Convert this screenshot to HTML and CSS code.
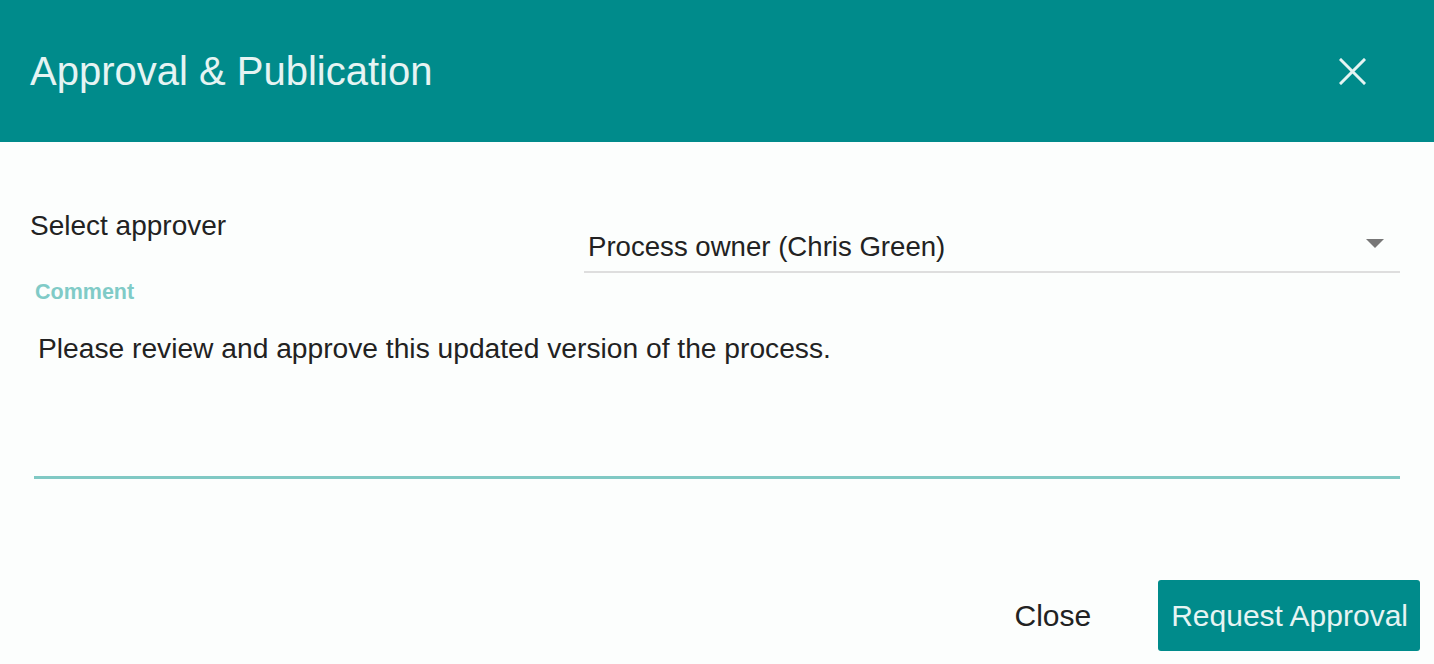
FILE: index.html
```html
<!DOCTYPE html>
<html lang="en">
<head>
  <meta charset="UTF-8" />
  <title>Approval &amp; Publication</title>
  <link rel="stylesheet" href="styles.css">
</head>
<body>

<div class="dialog">
  <!-- Header -->
  <div class="dialog-header">
    <h1>Approval &amp; Publication</h1>
    <button class="close-x" aria-label="Close">
      <svg width="27" height="27" viewBox="0 0 27 27">
        <path d="M2 2 L25 25 M25 2 L2 25" stroke="#e6f4f3" stroke-width="3" stroke-linecap="square" fill="none"/>
      </svg>
    </button>
  </div>

  <!-- Body -->
  <div class="dialog-body">
    <div class="row">
      <div class="label">Select approver</div>
      <div class="select">
        <span>Process owner (Chris Green)</span>
        <span class="arrow"></span>
      </div>
    </div>

    <div class="comment-label">Comment</div>
    <div class="comment-box">Please review and approve this updated version of the process.</div>
  </div>

  <!-- Footer -->
  <div class="dialog-footer">
    <button class="btn-flat">Close</button>
    <button class="btn-primary">Request Approval</button>
  </div>
</div>

</body>
</html>
```

FILE: styles.css
```css
body {
  margin: 0;
  background: #fcfefd;
  font-family: "Liberation Sans", Arial, sans-serif;
  color: #222;
}
.dialog {
  width: 1434px;
  height: 664px;
  display: flex;
  flex-direction: column;
}
.dialog-header {
  height: 142px;
  background: #008b8b;
  display: flex;
  align-items: center;
  justify-content: space-between;
  padding: 0 68px 0 30px;
  box-sizing: border-box;
}
.dialog-header h1 {
  margin: 0;
  font-size: 40px;
  font-weight: normal;
  color: #e6f4f3;
  line-height: 48px;
}
.close-x {
  background: none;
  border: none;
  padding: 0;
  width: 27px;
  height: 27px;
  cursor: pointer;
  display: block;
}
.close-x svg {
  display: block;
}
.dialog-body {
  padding: 68px 34px 0 30px;
}
.row {
  display: flex;
  align-items: flex-start;
}
.label {
  flex: 0 0 554px;
  font-size: 28px;
  line-height: 32px;
}
.select {
  flex: 1;
  margin-top: 21px;
  padding: 0 16px 8px 4px;
  border-bottom: 2px solid #dedede;
  display: flex;
  align-items: center;
  justify-content: space-between;
  font-size: 27.6px;
  line-height: 32px;
}
.arrow {
  width: 0;
  height: 0;
  border-left: 9px solid transparent;
  border-right: 9px solid transparent;
  border-top: 9px solid #777;
  margin-bottom: 8px;
}
.comment-label {
  margin-top: 7px;
  padding-left: 5px;
  font-size: 21.5px;
  font-weight: bold;
  line-height: 24px;
  color: #80cbc7;
}
.comment-box {
  margin-left: 4px;
  padding: 28px 4px 0 4px;
  height: 144px;
  border-bottom: 3px solid #80c9c4;
  font-size: 28.2px;
  line-height: 32px;
}
.dialog-footer {
  margin-top: 101px;
  padding-right: 14px;
  display: flex;
  justify-content: flex-end;
  align-items: center;
}
.dialog-footer button {
  font-family: "Liberation Sans", Arial, sans-serif;
  font-size: 30px;
  height: 71px;
  border: none;
  border-radius: 3px;
  cursor: pointer;
}
.btn-flat {
  background: none;
  color: #222;
  padding: 0 13px;
  margin-right: 54px;
}
.btn-primary {
  background: #008b8b;
  color: #e6f4f3;
  padding: 0 12px 0 13px;
}
```
